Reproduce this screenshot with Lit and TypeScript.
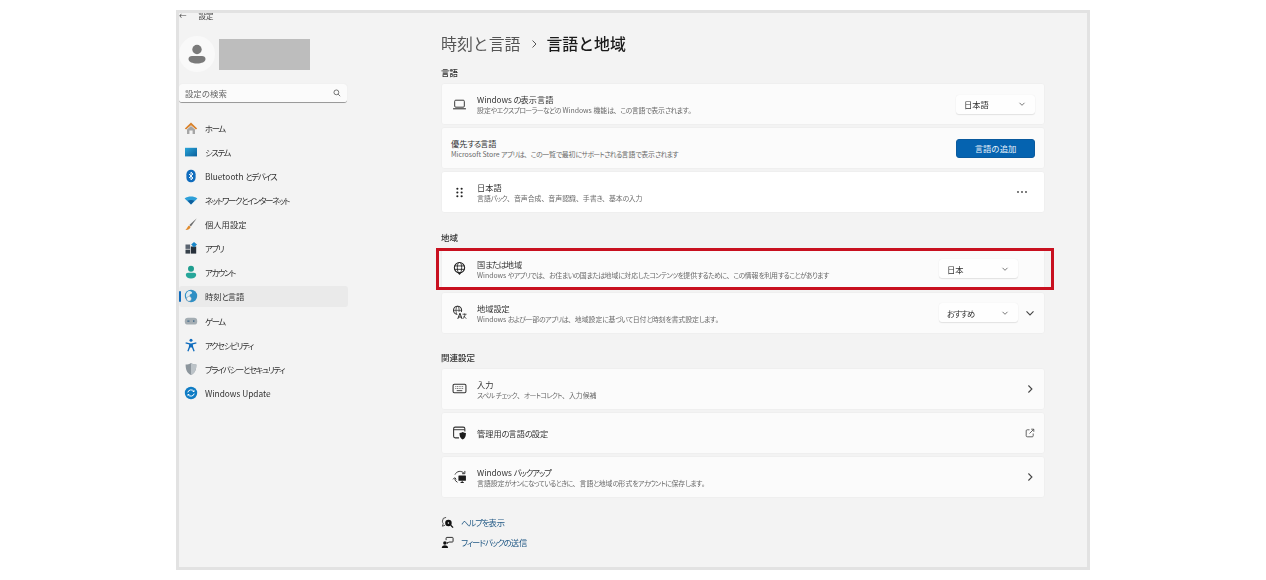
import { LitElement, html, css, svg } from "lit";
import { customElement } from "lit/decorators.js";

const k = (text: string) =>
  text.split(/([\u3041-\u30ff]+)/).map((part, i) => (i % 2 ? html`<span class="k">${part}</span>` : part));

const nav: [string, any][] = [
  ["ホーム", svg`<path d="M7 1.500 .8 7.400l1.300 1.200L7 4.200l4.900 4.400 1.300-1.200z" fill="#d9822b"/><path d="M3 8.400 7 4.900l4 3.500V13H8.600V9.600H5.400V13H3z" fill="#a6a6a6"/>`],
  ["システム", svg`<defs><linearGradient id="sg" x1="0" y1="0" x2="1" y2="1"><stop offset="0" stop-color="#2aa5d8"/><stop offset="1" stop-color="#0a5f9c"/></linearGradient></defs><rect x="1" y="2.800" width="12" height="8.600" fill="url(#sg)"/>`],
  ["Bluetooth とデバイス", svg`<rect x="2.400" y=".8" width="9.200" height="12.400" rx="4.400" fill="#0f6cbd"/><path d="M5 5l4 4-2 1.800V3.200L9 5 5 9" fill="none" stroke="#fff" stroke-width=".9"/>`],
  ["ネットワークとインターネット", svg`<path d="M.6 5.400C4.400 3 9.600 3 13.400 5.400L7 11.400z" fill="#2d9fd8"/><path d="M3.600 7.800C5.600 6.800 8.400 6.800 10.400 7.800L7 11.400z" fill="#0f5e9c"/>`],
  ["個人用設定", svg`<path d="M12.800 1.200 5.400 8l1.500 1.500z" fill="#6d6d6d"/><path d="M5 8.400 6.600 10C6 12.200 3.800 13.200 1.400 13 3 11.800 3.400 9.600 5 8.400z" fill="#e08a2c"/>`],
  ["アプリ", svg`<rect x="1.500" y="3.500" width="4.600" height="4.400" fill="#5a6470"/><rect x="1.500" y="8.600" width="4.600" height="4" fill="#37414b"/><rect x="6.800" y="5.500" width="5.400" height="7.100" fill="#27303a"/><path d="M10 1 13 3.600 10 6.400 7.200 3.600z" fill="#1a86c8"/>`],
  ["アカウント", svg`<circle cx="7" cy="3.800" r="3" fill="#1f9e8f"/><path d="M1.800 10c0-1.400 1-2.200 2.200-2.200h6c1.200 0 2.200.8 2.200 2.200 0 2-2.200 3.400-5.200 3.400S1.800 12 1.800 10z" fill="#26a69a"/>`],
  ["時刻と言語", svg`<circle cx="7" cy="7" r="6.200" fill="#2f8fc4"/><path d="M4 2.400c2.200-1 4.400.4 4 1.600-.3 1.200-2 1-2.400 2.200-.3 1.400 1.400 1.600 1.200 3-.2 1.200-1.400 2.400-2.200 2.400C3 10.600 2.800 8.600 2 7.400 1.600 5 2.600 3.400 4 2.400z" fill="#dfeaf0"/><circle cx="5" cy="9.800" r="2.400" fill="#f2f2f2" stroke="#7f9bb0" stroke-width=".5"/>`],
  ["ゲーム", svg`<rect x=".8" y="3.800" width="12.400" height="6.800" rx="3.200" fill="#a4adb3"/><rect x="3.300" y="6.600" width="2.200" height="1" fill="#2f5e80"/><circle cx="9.800" cy="7.100" r=".8" fill="#2f5e80"/>`],
  ["アクセシビリティ", svg`<circle cx="7" cy="2.300" r="1.500" fill="#0f6cbd"/><path d="M1.800 4.200 7 5.400l5.200-1.200.3 1.200-3.700 1.200.4 2.300 1.500 4.100-1.200.4L7.900 9.400H6.100l-1.600 4-1.200-.4 1.500-4.100.4-2.300-3.700-1.200z" fill="#0f6cbd"/>`],
  ["プライバシーとセキュリティ", svg`<path d="M7 1c1.600 1.200 3.400 1.600 5.400 1.600 0 5-1.400 8.600-5.400 10.400C3 11.200 1.600 7.600 1.600 2.600 3.600 2.600 5.400 2.200 7 1z" fill="#8d969d"/><path d="M7 1c1.600 1.200 3.400 1.600 5.400 1.600 0 5-1.400 8.600-5.400 10.400z" fill="#bcc3c8"/>`],
  ["Windows Update", svg`<circle cx="7" cy="7" r="6.200" fill="#0f7cc4"/><path d="M3.800 6.400A3.300 3.300 0 0 1 9.800 5.400M10.200 7.600A3.300 3.300 0 0 1 4.200 8.600" fill="none" stroke="#fff" stroke-width="1"/><path d="M10.400 3.800v2.200H8.200zM3.600 10.200V8h2.200z" fill="#fff"/>`],
];

const ic = (body: any) => html`<svg class="ci" viewBox="0 0 14 14">${body}</svg>`;
const laptop = svg`<rect x="2.500" y="3" width="9" height="6.500" rx="1" fill="none" stroke="#333" stroke-width=".9"/><path d="M1 11h12" stroke="#333" stroke-width="1"/>`;
const globe = svg`<circle cx="7" cy="6.200" r="4.800" fill="none" stroke="#222" stroke-width="1"/><ellipse cx="7" cy="6.200" rx="2" ry="4.800" fill="none" stroke="#222" stroke-width=".8"/><path d="M2.400 4.600h9.200M2.400 7.800h9.200" stroke="#222" stroke-width=".8"/><path d="M5.400 11.200 7 13l1.600-1.800z" fill="#222"/>`;
const regional = svg`<circle cx="5.200" cy="5" r="3.800" fill="none" stroke="#333" stroke-width="1"/><ellipse cx="5.200" cy="5" rx="1.500" ry="3.800" fill="none" stroke="#333" stroke-width=".7"/><path d="M1.600 5h7.200" stroke="#333" stroke-width=".7"/><rect x="5" y="6.600" width="9" height="7" fill="#fbfbfb"/><path d="M5.400 13 7.400 7.600 9.400 13M6.200 11.200h2.400" fill="none" stroke="#222" stroke-width=".9"/><path d="M9.800 8.600h3.800M11.700 8v1M10.400 12.800l2-3.800M10.900 10.200l2.400 2.600" stroke="#222" stroke-width=".7" fill="none"/>`;
const keyboard = svg`<rect x="1" y="3" width="12" height="8" rx="1.200" fill="none" stroke="#333" stroke-width="1"/><path d="M3 5.200h8M3 7h8" stroke="#777" stroke-width=".9" stroke-dasharray="1 .6"/><path d="M4.400 9h5.200" stroke="#444" stroke-width=".9"/>`;
const admin = svg`<path d="M6.500 12H3a1.500 1.500 0 0 1-1.500-1.500v-7A1.500 1.500 0 0 1 3 2h7.500A1.500 1.500 0 0 1 12 3.500V6" fill="none" stroke="#333" stroke-width="1"/><path d="M1.500 4.400H12" stroke="#333" stroke-width=".9"/><path d="M10 6.600c1 .7 2 .9 3 .9 0 3-.7 5-3 6-2.300-1-3-3-3-6 1 0 2-.2 3-.9z" fill="#1c1c1c"/>`;
const backup = svg`<path d="M2.800 5.200A5 5 0 0 1 11.200 4" fill="none" stroke="#333" stroke-width=".9"/><path d="M12 1.800v2.600H9.400" fill="none" stroke="#333" stroke-width=".9"/><path d="M1 8l1.500 1.500L4 8" fill="none" stroke="#333" stroke-width=".9" transform="rotate(180 2.500 8.800)"/><path d="M2.500 9a4.500 4.500 0 0 0 2.600 3.400" fill="none" stroke="#333" stroke-width=".9"/><rect x="6" y="6" width="7" height="5" rx=".6" fill="#1c1c1c"/><path d="M8 12.600h3M9.500 11v1.600" stroke="#1c1c1c" stroke-width=".9"/>`;
const help = svg`<path d="M5.500 1.500a4 4 0 0 0-4 4c0 1 .3 1.900.9 2.600L1.500 11l2.800-1" fill="none" stroke="#333" stroke-width=".9"/><circle cx="8" cy="7.500" r="3.500" fill="#111"/><path d="M10.500 10l2.500 2.500" stroke="#111" stroke-width="1.400"/><circle cx="8" cy="7.500" r=".8" fill="#fff"/>`;
const feedback = svg`<circle cx="4.200" cy="7.500" r="1.900" fill="#111"/><path d="M.8 13c0-2 1.400-3 3.400-3s3.400 1 3.400 3z" fill="#111"/><path d="M5.500 4.500V2.300c0-.5.300-.8.800-.8h5.900c.5 0 .8.300.8.800v3.400c0 .5-.3.800-.8.800H8.500L6.900 8V6.500" fill="none" stroke="#222" stroke-width="1"/>`;
const chevDown = html`<svg class="cd" viewBox="0 0 10 10"><path d="M2.500 3.800 5 6.300 7.500 3.800" fill="none" stroke="#777" stroke-width="1"/></svg>`;
const chevRight = html`<svg class="act" viewBox="0 0 10 10"><path d="M3.400 1.500 6.900 5 3.400 8.500" fill="none" stroke="#444" stroke-width="1.100"/></svg>`;
const openExt = html`<svg class="act" viewBox="0 0 10 10"><path d="M4.500 1.800H2.200a1 1 0 0 0-1 1v5a1 1 0 0 0 1 1h5a1 1 0 0 0 1-1V5.500" fill="none" stroke="#555" stroke-width=".9"/><path d="M4.500 5.500 8.800 1.200M6.200 1.200h2.600v2.600" fill="none" stroke="#555" stroke-width=".9"/></svg>`;

@customElement("app-root")
export class AppRoot extends LitElement {
  static styles = css`
    :host { display: block; width: 1266px; height: 580px; background: #fff; font-family: "Noto Sans CJK JP", "Open Sans", sans-serif; color: #1f1f1f; overflow: hidden; }
    .k { font-feature-settings: "palt"; letter-spacing: -.12em; }
    .item .k { letter-spacing: -.155em; }
    .s .k { letter-spacing: -.09em; }
    .page { padding: 10px 176px; height: 100%; box-sizing: border-box; }
    .win { position: relative; box-sizing: border-box; width: 914px; height: 560px; background: #f3f3f3; border: 3px solid #e2e2e2; display: grid; grid-template-columns: 173px 1fr; overflow: hidden; }
    .blur { filter: blur(.3px); }
    .side { display: flex; flex-direction: column; }
    .topbar { height: 5px; display: flex; align-items: center; gap: 12px; font-size: 7.500px; color: #444; line-height: 5px; }
    .user { display: flex; align-items: center; gap: 4px; margin-top: 11px; height: 50px; }
    .avatar { width: 36px; height: 36px; border-radius: 50%; background: #f9f9f9; display: flex; align-items: center; justify-content: center; }
    .avatar svg { width: 24px; height: 24px; }
    .name { width: 91px; height: 31px; background: #bdbdbd; }
    .search { width: 168px; height: 19px; box-sizing: border-box; margin-top: 5px; background: #fbfbfb; border-radius: 3px; border-bottom: 1px solid #9a9a9a; box-shadow: 0 0 1px #ddd; display: flex; align-items: center; justify-content: space-between; padding: 0 6px 0 6px; font-size: 8.400px; color: #666; }
    .search svg { width: 8px; height: 8px; }
    .nav { margin-top: 14px; display: flex; flex-direction: column; gap: 3.150px; }
    .item { position: relative; width: 169px; height: 21px; display: flex; align-items: center; font-size: 8.300px; color: #333; border-radius: 3px; white-space: pre; }
    .item.sel { background: #eaeaea; }
    .item.sel::before { content: ""; position: absolute; left: 0; top: 5px; bottom: 5px; width: 2px; background: #0f6cbd; border-radius: 1px; }
    .item svg { width: 14px; height: 14px; margin: 0 7px 0 5px; flex: none; }
    .main { padding: 0 0 0 89px; }
    .crumb { height: 43px; display: flex; align-items: center; font-size: 15.900px; margin-top: 9px; color: #555; white-space: nowrap; }
    .crumb svg { width: 10px; height: 10px; margin: 0 7px 0 9px; }
    .crumb b { font-weight: 500; color: #1a1a1a; }
    h2 { margin: 0 0 3px; font-size: 8.500px; font-weight: 500; color: #333; height: 15px; line-height: 15px; }
    .group { display: flex; flex-direction: column; gap: 2px; width: 604px; }
    .sec2 { margin-top: 16.500px; }
    .sec3 { margin-top: 16px; }
    .card { height: 42px; box-sizing: border-box; background: #fbfbfb; border: 1px solid #efefef; border-radius: 3px; display: flex; align-items: center; padding: 0 9px 0 9px; }
    .card.white { background: #fff; }
    .ci { width: 15px; height: 15px; margin-right: 10px; flex: none; margin-left: 1px; }
    .txt { flex: 1; min-width: 0; display: flex; flex-direction: column; }
    .t { font-size: 8.200px; line-height: 12px; color: #333; white-space: nowrap; }
    .s { font-size: 6.900px; line-height: 10px; color: #6a6a6a; white-space: nowrap; }
    .sel-box { height: 19px; box-sizing: border-box; background: #fefefe; border-radius: 3px; box-shadow: 0 1px 1px #e2e2e2, 0 0 1px #e6e6e6; display: flex; align-items: center; justify-content: space-between; padding: 0 8px 0 8px; font-size: 8.300px; color: #333; }
    .cd { width: 10px; height: 10px; }
    .w78 { width: 79px; }
    .w78b { width: 79px; margin-right: 17px; }
    .w78c { width: 79px; margin-right: 7px; }
    .btn { width: 79px; height: 19px; background: #0563b0; color: #e8f2fa; border-radius: 3px; font-size: 8.300px; display: flex; align-items: center; justify-content: center; border: 1px solid #0a5a9e; box-sizing: border-box; }
    .act { width: 10px; height: 10px; flex: none; }
    .dots { width: 12px; height: 4px; margin-right: 7px; flex: none; }
    .links { margin-top: 17.500px; display: flex; flex-direction: column; gap: 6px; }
    .link { display: flex; align-items: center; height: 14px; font-size: 8.300px; color: #235a86; white-space: nowrap; }
    .link svg { width: 13px; height: 13px; margin-right: 7px; }
    .hl { position: absolute; left: 257px; top: 235px; width: 618px; height: 42px; box-sizing: border-box; border: 3px solid #c8101f; pointer-events: none; }
  `;

  render() {
    return html`<div class="page"><div class="win">
      <div class="side blur">
        <div class="topbar"><span>←</span><span>設定</span></div>
        <div class="user">
          <div class="avatar"><svg viewBox="0 0 24 24"><circle cx="12" cy="7.500" r="4.700" fill="#7a7a7a"/><path d="M3.500 17c0-2 1.500-3 3.500-3h10c2 0 3.500 1 3.500 3 0 3-4 4.500-8.500 4.500S3.500 20 3.500 17z" fill="#7a7a7a"/></svg></div>
          <div class="name"></div>
        </div>
        <div class="search"><span>設定の検索</span><svg viewBox="0 0 10 10"><circle cx="4.200" cy="4.200" r="3" fill="none" stroke="#555" stroke-width="1"/><path d="M6.400 6.400 9 9" stroke="#555" stroke-width="1"/></svg></div>
        <div class="nav">
          ${nav.map(([label, icon], i) => html`<div class="item ${i === 7 ? "sel" : ""}"><svg viewBox="0 0 14 14">${icon}</svg><span>${k(label)}</span></div>`)}
        </div>
      </div>
      <div class="main blur">
        <div class="crumb"><span>時刻と言語</span><svg viewBox="0 0 10 10"><path d="M3.500 1.500 7 5 3.500 8.500" fill="none" stroke="#555" stroke-width="1"/></svg><b>言語と地域</b></div>
        <h2>言語</h2>
        <div class="group">
          <div class="card">${ic(laptop)}<div class="txt"><div class="t">${k("Windows の表示言語")}</div><div class="s">${k("設定やエクスプローラーなどの Windows 機能は、この言語で表示されます。")}</div></div><div class="sel-box w78"><span>日本語</span>${chevDown}</div></div>
          <div class="card"><div class="txt"><div class="t">${k("優先する言語")}</div><div class="s">${k("Microsoft Store アプリは、この一覧で最初にサポートされる言語で表示されます")}</div></div><div class="btn">言語の追加</div></div>
          <div class="card white">${ic(svg`<g fill="#222"><circle cx="5" cy="3.500" r="1"/><circle cx="9" cy="3.500" r="1"/><circle cx="5" cy="7" r="1"/><circle cx="9" cy="7" r="1"/><circle cx="5" cy="10.500" r="1"/><circle cx="9" cy="10.500" r="1"/></g>`)}<div class="txt"><div class="t">日本語</div><div class="s">${k("言語パック、音声合成、音声認識、手書き、基本の入力")}</div></div><svg class="dots" viewBox="0 0 12 4"><g fill="#444"><circle cx="2" cy="2" r=".9"/><circle cx="6" cy="2" r=".9"/><circle cx="10" cy="2" r=".9"/></g></svg></div>
        </div>
        <h2 class="sec2">地域</h2>
        <div class="group">
          <div class="card">${ic(globe)}<div class="txt"><div class="t">${k("国または地域")}</div><div class="s">${k("Windows やアプリでは、お住まいの国または地域に対応したコンテンツを提供するために、この情報を利用することがあります")}</div></div><div class="sel-box w78b"><span>日本</span>${chevDown}</div></div>
          <div class="card">${ic(regional)}<div class="txt"><div class="t">地域設定</div><div class="s">${k("Windows および一部のアプリは、地域設定に基づいて日付と時刻を書式設定します。")}</div></div><div class="sel-box w78c"><span>${k("おすすめ")}</span>${chevDown}</div><svg class="act" viewBox="0 0 10 10"><path d="M1.500 3.400 5 6.900 8.500 3.400" fill="none" stroke="#444" stroke-width="1.100"/></svg></div>
        </div>
        <h2 class="sec3">関連設定</h2>
        <div class="group">
          <div class="card">${ic(keyboard)}<div class="txt"><div class="t">入力</div><div class="s">${k("スペル チェック、オートコレクト、入力候補")}</div></div>${chevRight}</div>
          <div class="card">${ic(admin)}<div class="txt"><div class="t">${k("管理用の言語の設定")}</div></div>${openExt}</div>
          <div class="card">${ic(backup)}<div class="txt"><div class="t">${k("Windows バックアップ")}</div><div class="s">${k("言語設定がオンになっているときに、言語と地域の形式をアカウントに保存します。")}</div></div>${chevRight}</div>
        </div>
        <div class="links">
          <div class="link"><svg viewBox="0 0 14 14">${help}</svg><span>${k("ヘルプを表示")}</span></div>
          <div class="link"><svg viewBox="0 0 14 14">${feedback}</svg><span>${k("フィードバックの送信")}</span></div>
        </div>
      </div>
      <div class="hl"></div>
    </div></div>`;
  }
}
